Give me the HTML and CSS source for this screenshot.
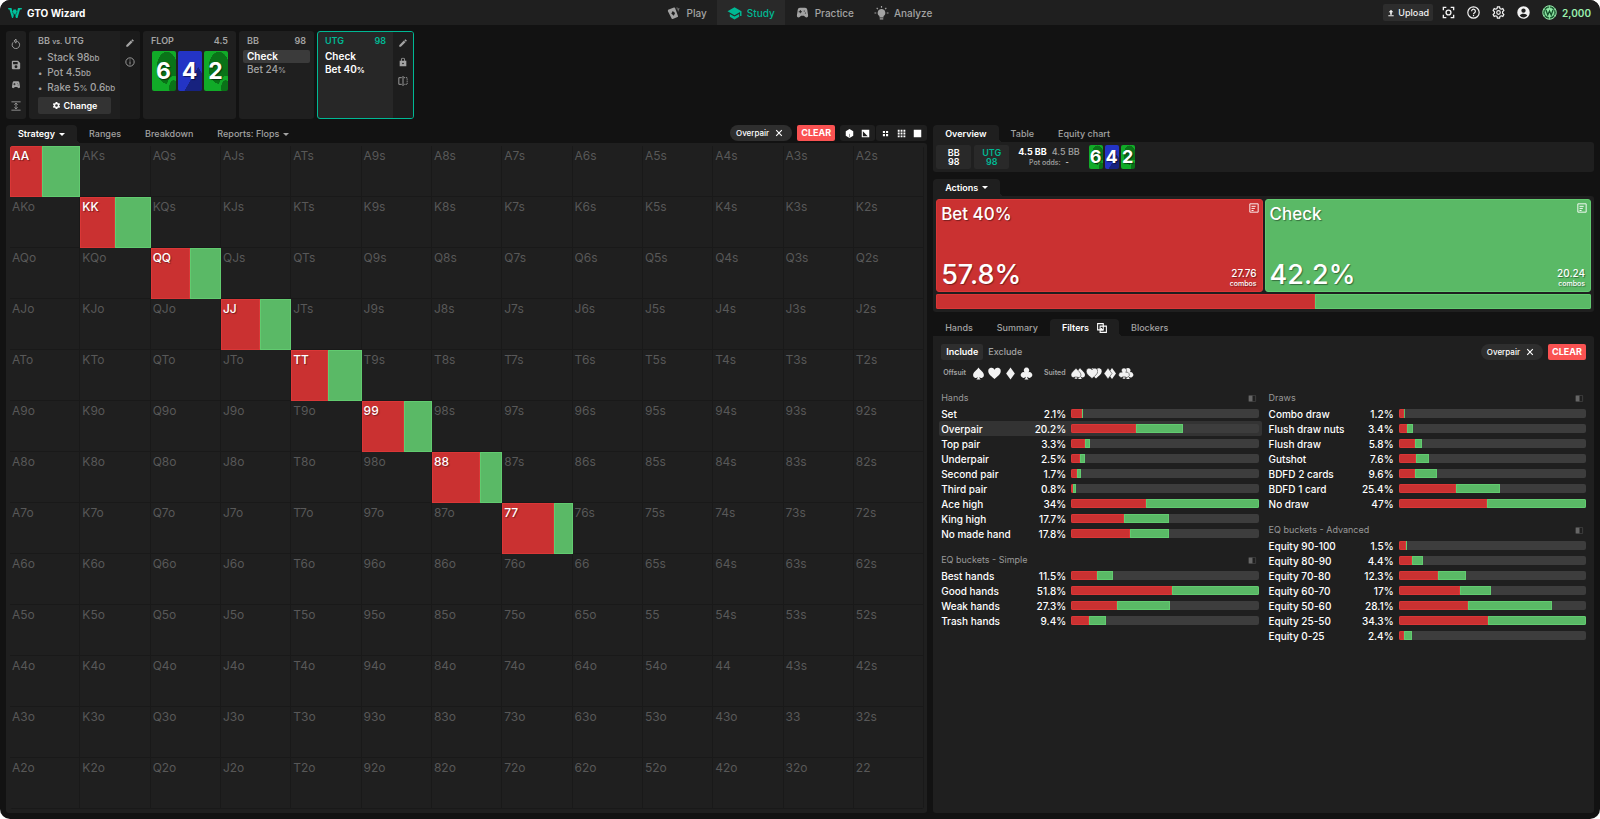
FILE: index.html
```html
<!DOCTYPE html>
<html lang="en">
<head>
<meta charset="utf-8">
<title>GTO Wizard</title>
<link rel="stylesheet" href="styles.css">
</head>
<body>
<svg class="defs" aria-hidden="true">
  <symbol id="pencil" viewBox="0 0 24 24"><path d="M3 17.2V21h3.800L17.900 9.900l-3.800-3.800zM20.700 7a1 1 0 0 0 0-1.400l-2.300-2.300a1 1 0 0 0-1.400 0l-1.900 1.900 3.800 3.800z"/></symbol>
  <symbol id="pad" viewBox="0 0 24 24"><path fill-rule="evenodd" d="M21.600 16.100 20.200 6.300A3.800 3.800 0 0 0 16.400 3H7.600a3.800 3.800 0 0 0-3.800 3.300L2.400 16.100C2.200 18 3.500 19.500 5.200 19.500c.8 0 1.500-.3 2-.8L9.500 16.500h5l2.300 2.200c.5.5 1.200.8 2 .8 1.700 0 3-1.500 2.800-3.400zM11 10.500H9v2H7.500v-2h-2V9h2V7H9v2h2zM15 9.500A1 1 0 1 1 15 7.500a1 1 0 0 1 0 2zM17 13a1 1 0 1 1 0-2 1 1 0 0 1 0 2z"/></symbol>
  <symbol id="gear" viewBox="0 0 24 24"><path fill-rule="evenodd" d="M19.100 12.900a7 7 0 0 0 0-1.800l2-1.600a.5.5 0 0 0 .1-.6l-1.900-3.300a.5.5 0 0 0-.6-.2l-2.400 1a7 7 0 0 0-1.600-1l-.4-2.500a.5.5 0 0 0-.5-.4h-3.800a.5.5 0 0 0-.5.400L9.200 5.400a7 7 0 0 0-1.600 1l-2.400-1a.5.5 0 0 0-.6.2L2.700 8.900a.5.5 0 0 0 .1.600l2 1.600a7 7 0 0 0 0 1.800l-2 1.600a.5.5 0 0 0-.1.600l1.900 3.300c.1.200.4.300.6.200l2.400-1a7 7 0 0 0 1.600 1l.4 2.500c0 .2.200.4.500.4h3.800c.2 0 .5-.2.500-.4l.4-2.500a7 7 0 0 0 1.600-1l2.400 1c.2.100.5 0 .6-.2l1.900-3.300a.5.5 0 0 0-.1-.6zM12 15.600a3.600 3.600 0 1 1 0-7.200 3.600 3.600 0 0 1 0 7.200z"/></symbol>
  <symbol id="close" viewBox="0 0 10 10"><path d="M1.500 1.500l7 7M8.500 1.500l-7 7" fill="none" stroke="currentColor" stroke-width="1.400"/></symbol>
  <symbol id="spade" viewBox="0 0 24 24"><path d="M12 1C9 6 2 9.500 2 15a5 5 0 0 0 8.600 3.500C10.400 20.500 9.500 22 8 23h8c-1.500-1-2.400-2.500-2.600-4.500A5 5 0 0 0 22 15C22 9.500 15 6 12 1z"/></symbol>
  <symbol id="heart" viewBox="0 0 24 24"><path d="M12 22C6 17 .5 13 .5 7.700A6 6 0 0 1 12 5a6 6 0 0 1 11.500 2.700C23.500 13 18 17 12 22z"/></symbol>
  <symbol id="diamond" viewBox="0 0 24 24"><path d="M12 1l8 11-8 11L4 12z"/></symbol>
  <symbol id="club" viewBox="0 0 24 24"><path d="M12 1a5 5 0 0 0-4.200 7.700l.6.9A5.300 5.300 0 1 0 10.700 18C10.400 20.500 9.500 22 8 23h8c-1.500-1-2.400-2.500-2.700-5a5.300 5.300 0 1 0 2.300-8.400l.6-.9A5 5 0 0 0 12 1z"/></symbol>
  <symbol id="split" viewBox="0 0 12 10"><rect x=".5" y=".5" width="10" height="9" rx="1" fill="none" stroke="#4c4c4c"/><path d="M1 1h5v8H1z" fill="#666"/></symbol>
  <symbol id="note" viewBox="0 0 12 12"><path d="M1 1h10v10H1zM3 4h5M3 6.500h4M3 9h2.500" fill="none" stroke="currentColor" stroke-width="1.100"/></symbol>
</svg>

<div class="app">
  <header class="top">
    <a class="brand" href="#"><svg viewBox="0 0 28 20"><path d="M0 0h7l2 8 2-5h5l2 5 2-8h8l-1 3h-3l-5 17h-3l-3-9-3 9H8L3 3H1z" fill="#00c19c"/><path d="M9 8l4 8M18 8l-4 8" stroke="#1f1f1f" stroke-width="1.200"/></svg>GTO Wizard</a>
    <nav class="nav">
      <a href="#"><svg viewBox="0 0 24 24"><path fill-rule="evenodd" d="M1 6.500l10-3.800a1.500 1.500 0 0 1 2 .9l5 13.500a1.500 1.500 0 0 1-.9 1.900L9 22.200a1.500 1.500 0 0 1-1.900-.9L.5 8.500zM9 8.500L6.500 13l4.300 3.800L13 12zM15.500 2.500l1.500 0v6zM19 3.500l1.500.7-2.500 6z"/></svg>Play</a>
      <a href="#" class="on"><svg viewBox="0 0 24 24"><path d="M12 2L0 9l12 7 9.500-5.600V17H24V9zM4 13.500v5L12 23l8-4.500v-5L12 18z"/></svg>Study</a>
      <a href="#"><svg viewBox="0 0 24 24"><use href="#pad"/></svg>Practice</a>
      <a href="#"><svg viewBox="0 0 24 24"><path d="M12 5a6.500 6.500 0 0 0-3.500 12v2.500h7V17A6.500 6.500 0 0 0 12 5zM9 21h6v2H9zM11 0h2v3h-2zM0 11h3v2H0zM21 11h3v2h-3zM3 4l1.500-1.500 2 2L5 6zM21 4l-1.500-1.500-2 2L19 6z"/></svg>Analyze</a>
    </nav>
    <div class="tools">
      <button class="upload"><svg viewBox="0 0 24 24"><path d="M12 2l-7 8h4.500v7h5v-7H19zM4 19h16v3H4z"/></svg>Upload</button>
      <button class="ic" aria-label="Scan"><svg viewBox="0 0 24 24"><path d="M2.500 8V2.500H8M16 2.500h5.500V8M21.500 16v5.500H16M8 21.500H2.500V16" fill="none" stroke="currentColor" stroke-width="2.500"/><circle cx="12" cy="12" r="4.500" fill="none" stroke="currentColor" stroke-width="2.500"/></svg></button>
      <button class="ic" aria-label="Help"><svg viewBox="0 0 24 24"><g fill="none" stroke="currentColor" stroke-width="2.200"><circle cx="12" cy="12" r="10.500"/><path d="M8.500 9.500a3.500 3.500 0 1 1 5.500 2.800c-1.200.8-2 1.400-2 2.700M12 16.500V19"/></g></svg></button>
      <button class="ic" aria-label="Settings"><svg viewBox="0 0 24 24"><path d="M10 1.500h4l.7 3.200 2.200 1.200 3-1.100 2 3.500-2.400 2.200v3l2.400 2.200-2 3.500-3-1.100-2.200 1.200-.7 3.200h-4l-.7-3.200-2.200-1.200-3 1.100-2-3.500 2.400-2.200v-3L2.100 8.300l2-3.500 3 1.100 2.200-1.200z" fill="none" stroke="currentColor" stroke-width="2.200"/><circle cx="12" cy="12" r="3.300" fill="none" stroke="currentColor" stroke-width="2.200"/></svg></button>
      <button class="ic" aria-label="Account"><svg viewBox="0 0 24 24"><path fill-rule="evenodd" d="M12 .5a11.500 11.500 0 1 0 0 23 11.500 11.500 0 0 0 0-23zM12 4.500a4 4 0 1 1 0 8 4 4 0 0 1 0-8zM5 17.500c1.500-2 4-3 7-3s5.500 1 7 3a8.700 8.700 0 0 1-14 0z"/></svg></button>
      <a class="coins" href="#"><svg viewBox="0 0 30 30"><circle cx="15" cy="15" r="13.500" fill="#1c5a33" stroke="#9af0ae" stroke-width="2"/><circle cx="15" cy="15" r="10" fill="#8fe8a5" stroke="#1c5a33"/><path d="M8 10l3.500 10L15 12l3.500 8L22 10" fill="none" stroke="#14522b" stroke-width="2.600"/><path d="M15 1v5M15 24v5M3 8l3 2M27 8l-3 2M3 22l3-2M27 22l-3-2" stroke="#9af0ae" stroke-width="1.500"/></svg>2,000</a>
    </div>
  </header>

  <section class="strip">
    <div class="card rail">
      <button aria-label="Reset"><svg viewBox="0 0 24 24"><path d="M5 8a9 9 0 1 0 7-3M12 0v10L7 5z" fill="none" stroke="currentColor" stroke-width="2.200"/></svg></button>
      <button aria-label="Save"><svg viewBox="0 0 24 24"><path fill-rule="evenodd" d="M2 4a2 2 0 0 1 2-2h13l5 5v13a2 2 0 0 1-2 2H4a2 2 0 0 1-2-2zM5 5v5h11V5zM12 12.500a3.500 3.500 0 1 0 0 7 3.500 3.500 0 0 0 0-7z"/></svg></button>
      <button aria-label="Train"><svg><use href="#pad"/></svg></button>
      <button aria-label="Collapse"><svg viewBox="0 0 24 24"><path d="M1 2h22M1 22h22M12 5v14M8 9l4-4 4 4M8 15l4 4 4-4" fill="none" stroke="currentColor" stroke-width="2"/></svg></button>
    </div>
    <div class="card spot">
      <div class="spot-main">
        <h2>BB <small>vs.</small> UTG</h2>
        <ul><li>Stack 98<small>bb</small></li><li>Pot 4.5<small>bb</small></li><li>Rake 5<small>%</small> 0.6<small>bb</small></li></ul>
        <button class="change"><svg><use href="#gear"/></svg>Change</button>
      </div>
      <div class="side">
        <button aria-label="Edit"><svg><use href="#pencil"/></svg></button>
        <button aria-label="Info"><svg viewBox="0 0 24 24"><g fill="none" stroke="currentColor" stroke-width="2.200"><circle cx="12" cy="12" r="10"/><path d="M12 6v2.500M12 10.500V18"/></g></svg></button>
      </div>
    </div>
    <div class="card flop">
      <div class="head"><span>FLOP</span><span>4.5</span></div>
      <div class="board"><span class="pc g">6</span><span class="pc b">4</span><span class="pc g">2</span></div>
    </div>
    <div class="card seat">
      <div class="head"><span>BB</span><span>98</span></div>
      <button class="act picked">Check</button>
      <button class="act">Bet 24<small>%</small></button>
    </div>
    <div class="card seat current">
      <div class="seat-main">
        <div class="head"><span>UTG</span><span>98</span></div>
        <button class="act">Check</button>
        <button class="act">Bet 40<small>%</small></button>
      </div>
      <div class="side">
        <button aria-label="Edit"><svg><use href="#pencil"/></svg></button>
        <button aria-label="Lock"><svg viewBox="0 0 24 24"><path fill-rule="evenodd" d="M7 9V6.500a5 5 0 0 1 10 0V9h3v13H4V9zM9 9h6V6.500a3 3 0 0 0-6 0zM12 13.500a2 2 0 1 0 0 4 2 2 0 0 0 0-4z"/></svg></button>
        <button aria-label="Compare"><svg viewBox="0 0 24 24"><path d="M9 4H2v16h7M12 0v24" fill="none" stroke="currentColor" stroke-width="2.200"/><path d="M14 4h8v16h-8" fill="none" stroke="currentColor" stroke-width="2.200" stroke-dasharray="3 2"/></svg></button>
      </div>
    </div>
  </section>

  <main class="cols">
    <section class="left">
      <div class="bar">
        <div class="tabs">
          <button class="tab on">Strategy<i class="caret"></i></button>
          <button class="tab">Ranges</button>
          <button class="tab">Breakdown</button>
          <button class="tab">Reports: Flops<i class="caret"></i></button>
        </div>
        <div class="filters">
          <button class="pill">Overpair<svg><use href="#close"/></svg></button>
          <button class="clear">CLEAR</button>
          <div class="views">
            <div class="grp">
              <button aria-label="3D view"><svg viewBox="0 0 12 12"><path d="M6 0l5 3v6l-5 3-5-3V3z"/><path d="M6 6.500V11" stroke="#1f1f1f" stroke-width=".6" fill="none"/></svg></button>
              <button aria-label="Contrast"><svg viewBox="0 0 12 12"><path fill-rule="evenodd" d="M1 1h10v10H1zM2.500 3v6.500H9z"/></svg></button>
            </div>
            <div class="grp">
              <button aria-label="Small grid"><svg viewBox="0 0 12 12"><path d="M2.500 2.500h2.800v2.800H2.500zM6.700 2.500h2.800v2.800H6.700zM2.500 6.700h2.800v2.800H2.500zM6.700 6.700h2.800v2.800H6.700z"/></svg></button>
              <button aria-label="Grid"><svg viewBox="0 0 12 12"><path d="M1 1h2.500v2.500H1zM4.800 1h2.500v2.500H4.800zM8.600 1h2.500v2.500H8.600zM1 4.800h2.500v2.500H1zM4.800 4.800h2.500v2.500H4.800zM8.600 4.800h2.500v2.500H8.600zM1 8.600h2.500v2.500H1zM4.800 8.600h2.500v2.500H4.800zM8.600 8.600h2.500v2.500H8.600z"/></svg></button>
              <button aria-label="Full"><svg viewBox="0 0 12 12"><path d="M1 1h10v10H1z"/></svg></button>
            </div>
          </div>
        </div>
      </div>
      <div class="panel matrix-panel"><div class="matrix" id="matrix"></div></div>
    </section>

    <section class="right">
      <div class="block">
        <div class="tabs">
          <button class="tab on">Overview</button>
          <button class="tab">Table</button>
          <button class="tab">Equity chart</button>
        </div>
        <div class="panel info">
          <button class="tile"><span>BB</span><span>98</span></button>
          <button class="tile teal"><span>UTG</span><span>98</span></button>
          <div class="pot">
            <div><b>4.5 BB</b><span>4.5 BB</span></div>
            <p>Pot odds: <em>-</em></p>
          </div>
          <div class="board mini"><span class="pc g">6</span><span class="pc b">4</span><span class="pc g">2</span></div>
        </div>
      </div>

      <div class="block">
        <div class="tabs"><button class="tab on">Actions<i class="caret"></i></button></div>
        <div class="panel actions">
          <div class="pair">
            <article class="action red">
              <div class="row"><h3>Bet 40%</h3><svg><use href="#note"/></svg></div>
              <div class="row end"><strong>57.8%</strong><p>27.76<small>combos</small></p></div>
            </article>
            <article class="action green">
              <div class="row"><h3>Check</h3><svg><use href="#note"/></svg></div>
              <div class="row end"><strong>42.2%</strong><p>20.24<small>combos</small></p></div>
            </article>
          </div>
          <div class="total"><i class="r" style="width:57.8%"></i><i class="gr" style="width:42.2%"></i></div>
        </div>
      </div>

      <div class="block grow">
        <div class="tabs">
          <button class="tab">Hands</button>
          <button class="tab">Summary</button>
          <button class="tab on">Filters<svg viewBox="0 0 16 16"><g fill="none" stroke="currentColor" stroke-width="1.700"><path d="M1 1h9v10H1z"/><path d="M5 5h10v10H5zM7 8v3h3"/></g></svg></button>
          <button class="tab">Blockers</button>
        </div>
        <div class="panel stats">
          <div class="stat-top">
            <div class="mode"><button class="on">Include</button><button>Exclude</button></div>
            <div class="filters">
              <button class="pill">Overpair<svg><use href="#close"/></svg></button>
              <button class="clear">CLEAR</button>
            </div>
          </div>
          <div class="suits">
            <span>Offsuit</span>
            <div class="suit-set" data-double="0"></div>
            <span>Suited</span>
            <div class="suit-set" data-double="1"></div>
          </div>
          <div class="stat-cols" id="stats"></div>
        </div>
      </div>
    </section>
  </main>
</div>
<script src="app.js"></script>
</body>
</html>
```
FILE: app.js
```js
const ranks = 'AKQJT98765432';
const betShare = { AA: 45, KK: 50, QQ: 56, JJ: 55, TT: 52, 99: 61, 88: 69, 77: 74 };

let cells = '';
for (let r = 0; r < 13; r++) {
  for (let c = 0; c < 13; c++) {
    const name = r === c ? ranks[r] + ranks[c]
      : r < c ? ranks[r] + ranks[c] + 's' : ranks[c] + ranks[r] + 'o';
    const bet = betShare[name];
    cells += bet
      ? `<button class="cell hit"><i class="r" style="width:${bet}%"></i><i class="gr" style="width:${100 - bet}%"></i><span>${name}</span></button>`
      : `<button class="cell"><span>${name}</span></button>`;
  }
}
document.getElementById('matrix').innerHTML = cells;

// Each row: label, share of range, bet width, check width
const groups = [
  [
    ['Hands', [
      ['Set', '2.1%', 6, 0.5], ['Overpair', '20.2%', 34.6, 25], ['Top pair', '3.3%', 7.5, 2.5],
      ['Underpair', '2.5%', 4.6, 3], ['Second pair', '1.7%', 3, 2], ['Third pair', '0.8%', 1.1, 1.3],
      ['Ace high', '34%', 40, 60], ['King high', '17.7%', 28, 24.2], ['No made hand', '17.8%', 31.2, 21]]],
    ['EQ buckets - Simple', [
      ['Best hands', '11.5%', 14, 8.3], ['Good hands', '51.8%', 53.7, 46.3],
      ['Weak hands', '27.3%', 24.3, 28.5], ['Trash hands', '9.4%', 9.5, 8.9]]]
  ],
  [
    ['Draws', [
      ['Combo draw', '1.2%', 2.7, 0.3], ['Flush draw nuts', '3.4%', 4.7, 2.8], ['Flush draw', '5.8%', 8.7, 3.7],
      ['Gutshot', '7.6%', 9.4, 6.9], ['BDFD 2 cards', '9.6%', 9, 11.5], ['BDFD 1 card', '25.4%', 30.7, 23.4],
      ['No draw', '47%', 47.2, 52.8]]],
    ['EQ buckets - Advanced', [
      ['Equity 90-100', '1.5%', 4.2, 0.5], ['Equity 80-90', '4.4%', 6.9, 6.2], ['Equity 70-80', '12.3%', 21.3, 14.8],
      ['Equity 60-70', '17%', 33, 16.5], ['Equity 50-60', '28.1%', 37, 44.8], ['Equity 25-50', '34.3%', 47.8, 52.2],
      ['Equity 0-25', '2.4%', 3, 4]]]
  ]
];

document.getElementById('stats').innerHTML = groups.map(col => '<div class="stat-col">' + col.map(([title, rows]) =>
  `<section class="group"><h4>${title}<svg><use href="#split"/></svg></h4>` +
  rows.map(([label, pct, bet, check]) =>
    `<button class="stat${label === 'Overpair' ? ' sel' : ''}"><span>${label}</span><span class="pct">${pct}</span>` +
    `<span class="track"><i class="r" style="width:${bet}%"></i><i class="gr" style="width:${check}%"></i></span></button>`
  ).join('') + '</section>').join('') + '</div>').join('');

document.querySelectorAll('.suit-set').forEach(set => {
  const double = set.dataset.double === '1';
  set.innerHTML = ['spade', 'heart', 'diamond', 'club'].map(s =>
    `<button class="${s}" aria-label="${s}">` + (double
      ? `<svg viewBox="0 0 32 24"><use href="#${s}" x="8" width="24" height="24"/><use class="front" href="#${s}" width="24" height="24"/></svg>`
      : `<svg viewBox="0 0 24 24"><use href="#${s}"/></svg>`) + '</button>').join('');
});
```
FILE: styles.css
```css
* { box-sizing: border-box; }
html, body { margin: 0; background: #fff; }
body { font: 500 10px/12px Inter, "Liberation Sans", sans-serif; color: #a3a3a3; }
h2, h3, h4, p, ul { margin: 0; padding: 0; font: inherit; }
button { border: 0; padding: 0; margin: 0; background: none; color: inherit; font: inherit; cursor: pointer; }
a { color: inherit; text-decoration: none; }
svg { display: block; fill: currentColor; flex: none; }
small { font-size: 8px; line-height: 8px; }
.defs { position: absolute; width: 0; height: 0; }

.app { min-height: 100vh; display: flex; flex-direction: column; background: #121212; border-radius: 10px; overflow: hidden; }
.r { display: block; background: #ca3131; box-shadow: inset 0 0 0 1px #da3737; }
.gr { display: block; background: #5ab966; box-shadow: inset 0 0 0 1px #62cb70; }

/* Header */
.top { display: grid; grid-template-columns: 1fr auto 1fr; height: 25px; background: #1f1f1f; align-items: center; padding: 0 9px 0 8px; }
.brand { display: flex; align-items: center; gap: 5px; color: #fff; font-weight: 700; }
.brand svg { width: 14px; height: 10px; }
.nav { display: flex; height: 25px; }
.nav a { display: flex; align-items: center; gap: 5px; padding: 0 10px; }
.nav svg { width: 15px; height: 14px; }
.nav .on { background: #292929; color: #00b894; }
.tools { display: flex; align-items: center; justify-content: flex-end; gap: 12px; color: #f2f2f2; }
.tools .ic svg { width: 13px; height: 13px; }
.upload { display: flex; align-items: center; justify-content: center; gap: 3px; height: 17px; padding: 0 4px; margin-right: -3px; background: #2d2d2d; border-radius: 2px; font-size: 9px; }
.upload svg { width: 8px; height: 8px; }
.coins { display: flex; align-items: center; gap: 5px; color: #9af0ae; font-weight: 600; }
.coins svg { width: 15px; height: 15px; }

/* Game tree strip */
.strip { display: flex; gap: 3px; padding: 6px; height: 100px; }
.card { background: #1f1f1f; border-radius: 3px; }
.rail { width: 20px; display: flex; flex-direction: column; align-items: center; justify-content: space-between; padding: 8px 0; }
.rail svg { width: 10px; height: 10px; }
.spot { display: flex; width: 111px; overflow: hidden; }
.spot-main { flex: 1; min-width: 0; padding: 4px 9px; display: flex; flex-direction: column; }
.spot h2 { font-size: 9px; font-weight: 600; line-height: 12px; }
.spot h2 small { font-size: 7px; }
.spot ul { list-style: none; margin: 3px 0 2px; white-space: nowrap; }
.spot li { height: 15px; line-height: 15px; }
.spot li::before { content: "•"; font-size: 8px; line-height: 8px; margin-right: 5px; }
.change { display: flex; align-items: center; justify-content: center; gap: 3px; height: 17px; background: #333; border-radius: 2px; color: #fff; font-size: 9px; font-weight: 600; }
.change svg { width: 9px; height: 9px; }
.side { width: 20px; flex: none; display: flex; flex-direction: column; align-items: center; gap: 9px; padding-top: 7px; background: #1b1b1b; }
.side svg { width: 10px; height: 10px; }
.head { display: flex; justify-content: space-between; font-size: 9px; font-weight: 600; line-height: 12px; padding: 0 4px; }
.flop { width: 93px; padding: 4px; }
.board { display: flex; justify-content: center; gap: 2px; }
.flop .board { margin-top: 4px; }
.pc { width: 24px; height: 40px; border-radius: 2px; display: grid; place-items: center; color: #fff; font: 700 23px/24px Inter, sans-serif; text-shadow: 1px 1px 1px #0008; }
.pc.g { background: radial-gradient(ellipse at 90% 92%, #0a7318 0 14%, #11ab28 15% 22%, transparent 23%), radial-gradient(ellipse at 62% 42%, #0a7318 0 48%, #11ab28 49%); }
.pc.b { background: linear-gradient(60deg, transparent 72%, #2334c5 73%), linear-gradient(120deg, #2334c5 62%, #17227f 63%); }
.seat { width: 75px; padding: 4px; display: flex; flex-direction: column; }
.act { display: block; text-align: left; height: 13px; line-height: 13px; padding: 0 4px; border-radius: 2px; }
.head + .act { margin-top: 3px; }
.act.picked { background: #3b3b3b; color: #fff; font-weight: 600; }
.current { width: 97px; padding: 0; flex-direction: row; background: #272727; border: 1px solid #00b894; overflow: hidden; }
.current .seat-main { flex: 1; padding: 3px; display: flex; flex-direction: column; }
.current .head { color: #00b894; }
.current .act { color: #fff; font-weight: 600; }
.current .side { background: #1d1d1d; padding-top: 6px; }

/* Columns */
.cols { flex: 1; display: grid; grid-template-columns: minmax(0, 46fr) minmax(0, 33fr); gap: 6px; padding: 0 6px 6px; }
.left, .right, .block { display: flex; flex-direction: column; }
.right { gap: 7px; }
.grow { flex: 1; }
.panel { background: #1f1f1f; border-radius: 0 3px 3px 3px; }
.bar { display: flex; justify-content: space-between; }
.tabs { display: flex; height: 18px; font-size: 9px; }
.right .tabs { height: 17px; }
.tab { position: relative; display: flex; align-items: center; padding: 0 12px; }
.tab.on { background: #1f1f1f; border-radius: 4px 4px 0 0; color: #fff; font-weight: 600; }
.tab.on::after { content: ""; position: absolute; left: 100%; bottom: 0; width: 4px; height: 4px; background: radial-gradient(circle at 100% 0, transparent 4px, #1f1f1f 4px); }
.tab svg { width: 10px; height: 10px; margin-left: 8px; }
.caret { margin-left: 4px; border: 3px solid transparent; border-top-color: currentColor; border-bottom: 0; }
.filters { display: flex; gap: 5px; align-items: flex-start; color: #fff; }
.pill { display: flex; align-items: center; gap: 6px; height: 16px; padding: 0 9px 0 6px; border-radius: 8px; background: #2e2e2e; font-size: 8px; }
.pill svg { width: 8px; height: 8px; }
.clear { height: 16px; width: 38px; border-radius: 2px; background: #fa5252; font-size: 9px; font-weight: 700; }
.views { display: flex; gap: 1px; }
.grp { display: flex; align-items: center; gap: 7px; height: 16px; padding: 0 5px; background: #1f1f1f; border-radius: 3px; }
.grp svg { width: 9px; height: 9px; }

/* Range matrix */
.matrix-panel { flex: 1; display: flex; padding: 3px 3px 4px 4px; }
.matrix { flex: 1; display: grid; grid-template-columns: repeat(13, minmax(0, 1fr)); grid-auto-rows: minmax(36px, 1fr); border-radius: 3px; overflow: hidden; }
.cell { position: relative; display: flex; align-items: stretch; border-right: 1px solid #191919; border-bottom: 1px solid #191919; color: #585858; font-size: 12px; font-weight: 400; line-height: 14px; }
.cell span { position: absolute; left: 2px; top: 3px; }
.cell.hit { border: 0; color: #fff; font-weight: 500; text-shadow: 1px 1px 1px #0006; }

/* Overview */
.info { display: flex; align-items: center; height: 30px; padding: 0 3px; gap: 3px; }
.tile { width: 35px; height: 24px; background: #292929; border-radius: 2px; color: #fff; font-size: 9px; font-weight: 600; line-height: 9px; }
.tile span { display: block; }
.tile.teal { color: #00b894; }
.pot { padding: 0 6px; line-height: 12px; font-size: 9px; }
.pot div { display: flex; gap: 5px; }
.pot b { color: #fff; font-weight: 700; }
.pot p { font-size: 7px; line-height: 10px; text-align: center; }
.pot em { font-style: normal; color: #fff; margin-left: 3px; }
.mini .pc { width: 14px; height: 24px; font-size: 18px; line-height: 20px; }

/* Actions */
.actions { padding: 3px; display: flex; flex-direction: column; gap: 2px; }
.pair { display: grid; grid-template-columns: 1fr 1fr; gap: 2px; }
.action { height: 93px; display: flex; flex-direction: column; justify-content: space-between; padding: 3px 3px 3px 4px; border-radius: 3px; color: #fff; text-shadow: 1px 1px 1px #0006; }
.action.red { background: #ca3131; border: 1px solid #da3737; }
.action.green { background: #5ab966; border: 1px solid #62cb70; }
.row { display: flex; justify-content: space-between; align-items: flex-start; }
.row.end { align-items: flex-end; padding-right: 2px; }
.row svg { width: 10px; height: 10px; }
.action h3 { font-size: 17px; line-height: 22px; font-weight: 500; }
.action strong { font-size: 27px; line-height: 27px; font-weight: 500; }
.action p { font-size: 10px; line-height: 11px; text-align: right; }
.action small { display: block; font-size: 7px; line-height: 9px; }
.total { display: flex; height: 15px; border-radius: 2px; overflow: hidden; }

/* Filters */
.stats { flex: 1; padding: 8px 5px 8px 6px; }
.stat-top { display: flex; justify-content: space-between; padding: 0 3px 0 2px; }
.mode { display: flex; }
.mode button { height: 16px; padding: 0 5px; border-radius: 2px; font-size: 9px; }
.mode .on { background: #2e2e2e; color: #fff; font-weight: 600; }
.suits { display: flex; align-items: center; height: 14px; margin: 6px 0 10px; padding-left: 4px; font-size: 7px; font-weight: 600; }
.suit-set { display: flex; gap: 3px; margin: 0 11px 0 6px; color: #f2f2f2; }
.suit-set svg { width: 13px; height: 13px; }
.suit-set[data-double="1"] { gap: 0; margin-left: 4px; }
.suit-set[data-double="1"] svg { width: 16px; height: 13px; }
.front { stroke: #1f1f1f; stroke-width: 1px; }
.stat-cols { display: grid; grid-template-columns: 1fr 1fr; gap: 5px; }
.stat-col { display: flex; flex-direction: column; gap: 11px; }
.group { display: flex; flex-direction: column; }
.group h4 { display: flex; justify-content: space-between; align-items: center; height: 16px; padding: 0 5px 0 2px; font-size: 9px; font-weight: 400; color: #999; }
.group h4 svg { width: 9px; height: 7px; }
.stat { display: grid; grid-template-columns: 91px 34px minmax(0, 1fr); align-items: center; height: 15px; padding: 0 3px 0 2px; border-radius: 2px; color: #fff; text-align: left; font-weight: 500; }
.stat.sel { background: #333; }
.pct { text-align: right; }
.track { display: flex; height: 9px; margin-left: 5px; border-radius: 2px; background: #3d3d3d; overflow: hidden; }
```
